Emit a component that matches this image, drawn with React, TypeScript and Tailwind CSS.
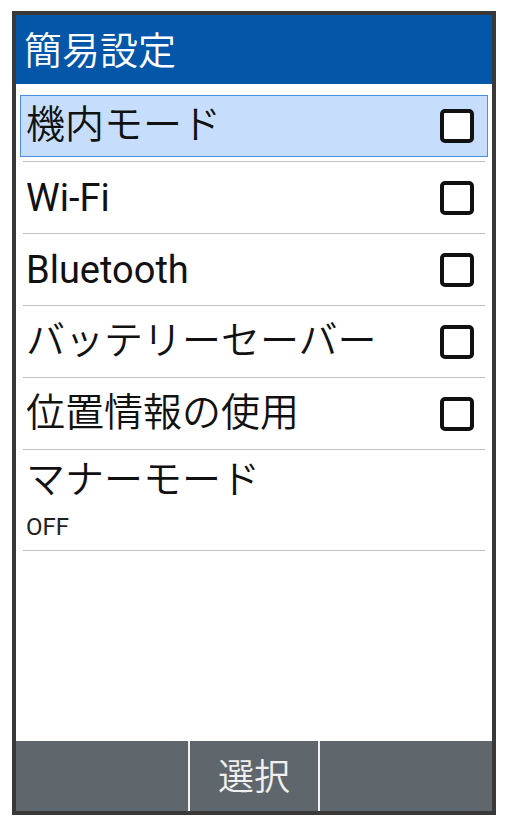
const items = [
  { label: "機内モード", latin: false },
  { label: "Wi-Fi", latin: true },
  { label: "Bluetooth", latin: true },
  { label: "バッテリーセーバー", latin: false },
  { label: "位置情報の使用", latin: false },
];

function CheckBox() {
  return <div className="h-[34px] w-[34px] rounded-[5px] border-[4px] border-[#111] bg-white" />;
}

export default function App() {
  const font = { fontFamily: 'Roboto, "Noto Sans CJK JP", sans-serif' };
  return (
    <div className="h-[826px] w-[507px] bg-white pl-[12px] pt-[11px]" style={font}>
      <div className="flex h-[804px] w-[484px] flex-col border-4 border-[#393939] bg-white">
        <header className="flex h-[69px] items-center bg-[#0456a8] pl-[8px] pt-[3px]">
          <h1 className="text-[38px] leading-none font-[350] text-white">簡易設定</h1>
        </header>

        <ul className="flex-1 px-[7px] pt-[6px]">
          {items.map((item, i) => (
            <li key={item.label} className="flex h-[72px] items-center border-b border-[#c2c2c2]">
              <div
                className={
                  i === 0
                    ? "-mx-[3px] flex h-[62px] flex-1 items-center justify-between border-[1.5px] border-[#4a8fe0] bg-[#c6defb] pl-[5px] pr-[13px]"
                    : "-mx-[3px] flex h-[62px] flex-1 items-center justify-between border-[1.5px] border-transparent pl-[5px] pr-[13px]"
                }
              >
                <span
                  className={
                    item.latin
                      ? "text-[38px] leading-none font-normal text-[#111]"
                      : "text-[39px] leading-none font-[350] text-[#111]"
                  }
                >
                  {item.label}
                </span>
                <CheckBox />
              </div>
            </li>
          ))}
          <li className="flex h-[101px] flex-col border-b border-[#c2c2c2] pl-[3px] pt-[8px]">
            <span className="text-[39px] leading-[44px] font-[350] text-[#111]">マナーモード</span>
            <span className="mt-[13px] text-[24px] leading-none text-[#222]">OFF</span>
          </li>
        </ul>

        <footer className="flex h-[70px] bg-[#5f676c]">
          <div className="w-[172px]" />
          <div className="flex w-[132px] items-center justify-center border-x-2 border-[#f2f2f2] pt-[4px]">
            <span className="text-[36px] leading-none font-[350] text-[#f0f0f0]">選択</span>
          </div>
          <div className="flex-1" />
        </footer>
      </div>
    </div>
  );
}
